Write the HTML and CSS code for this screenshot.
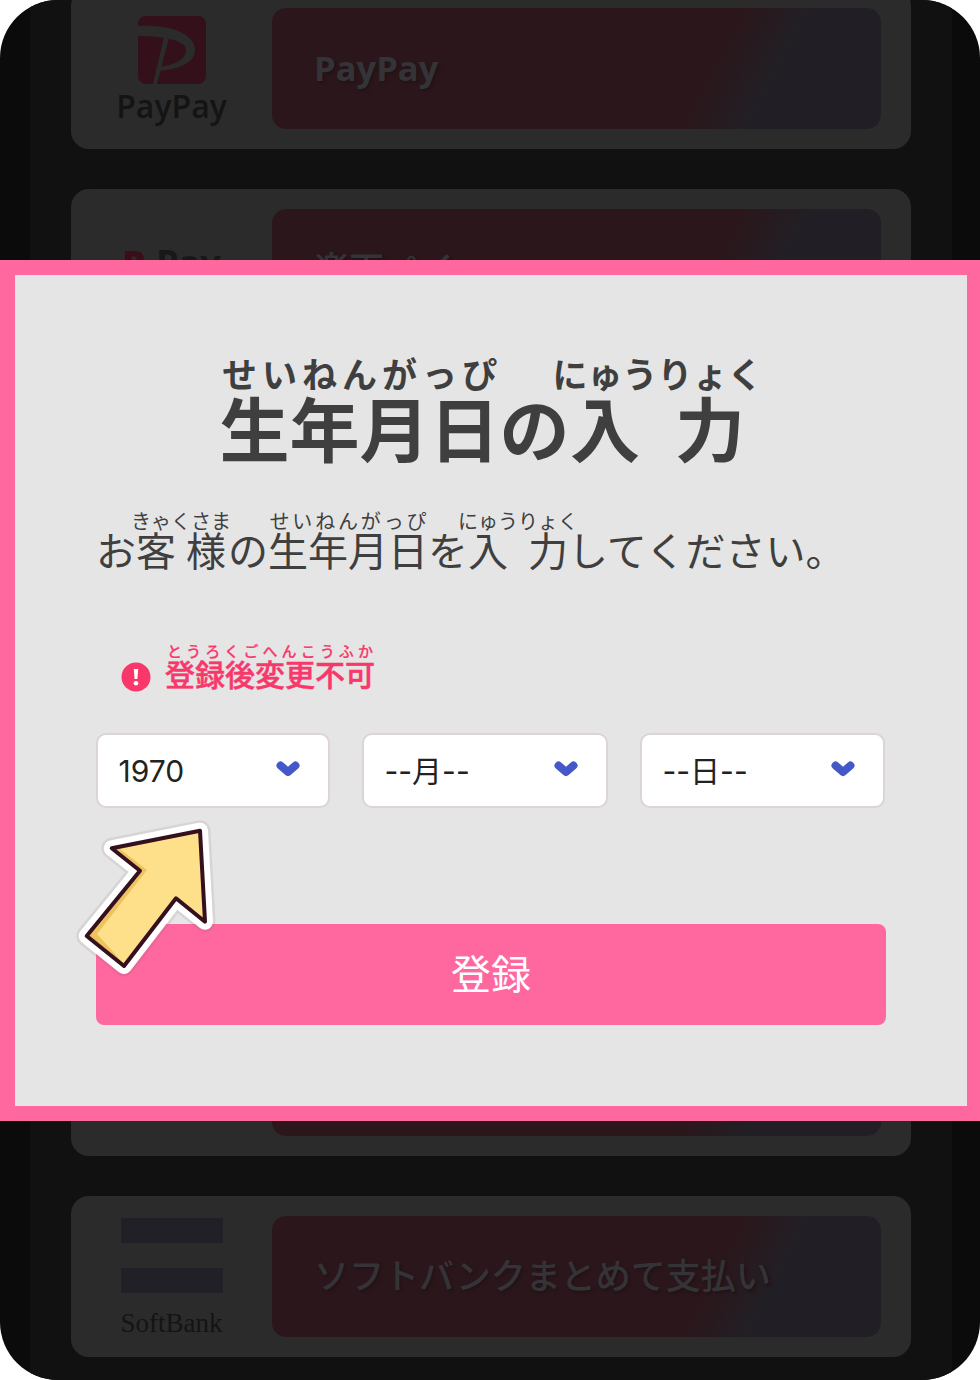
FILE: index.html
```html
<!DOCTYPE html>
<html lang="ja">
<head>
<meta charset="utf-8">
<title>生年月日の入力</title>
<link rel="stylesheet" href="styles.css">
</head>
<body>
<div class="phone">
  <div class="list">
    <div class="card">
      <div class="logo">
        <svg class="pp-icon" viewBox="0 0 68 68" width="68" height="68">
          <rect width="68" height="68" rx="8" fill="#33101a"/>
          <path d="M0 10C28 8 57 16 57 34C57 47 40 54 18 55L18.500 51C34 50 48 44 48 34C48 25 28 20 0 20Z" fill="#2b2b2b"/>
          <path d="M26 21L31 21.500L19 68L15 68Z" fill="#2b2b2b"/>
        </svg>
        <span class="pp-name">PayPay</span>
      </div>
      <div class="pay"><span class="pay-label latin">PayPay</span></div>
    </div>
    <div class="card">
      <div class="logo logo-center"><span class="rp-name"><b>R</b> Pay</span></div>
      <div class="pay"><span class="pay-label">楽天ペイ</span></div>
    </div>
    <div class="card"><div class="logo"></div><div class="pay"></div></div>
    <div class="card"><div class="logo"></div><div class="pay"></div></div>
    <div class="card"><div class="logo"></div><div class="pay"></div></div>
    <div class="card"><div class="logo"></div><div class="pay"></div></div>
    <div class="card">
      <div class="logo logo-sb">
        <span class="sb-bar"></span>
        <span class="sb-bar"></span>
        <span class="sb-name">SoftBank</span>
      </div>
      <div class="pay"><span class="pay-label">ソフトバンクまとめて支払い</span></div>
    </div>
  </div>

  <div class="modal">
    <h1 class="title"><ruby>生年月日<rt>せいねんがっぴ</rt></ruby>の<ruby>入力<rt>にゅうりょく</rt></ruby></h1>
    <p class="lead">お<ruby class="over-lead-a">客様<rt>きゃくさま</rt></ruby>の<ruby>生年月日<rt>せいねんがっぴ</rt></ruby>を<ruby>入力<rt>にゅうりょく</rt></ruby>してください。</p>
    <div class="notice">
      <svg class="notice-icon" viewBox="0 0 30 30" width="30" height="30">
        <circle cx="15" cy="15" r="14.500" fill="#f8386b"/>
        <path d="M12.800 7H17.200L16.400 17H13.600Z" fill="#fff"/>
        <circle cx="15" cy="21.300" r="2.300" fill="#fff"/>
      </svg>
      <span class="notice-text"><ruby>登録後変更不可<rt>とうろくごへんこうふか</rt></ruby></span>
    </div>
    <div class="selects">
      <div class="select"><span>1970</span><svg class="chev" viewBox="0 0 24 18" width="24" height="18"><path d="M4.500 5.500L12 12L19.500 5.500" /></svg></div>
      <div class="select"><span>--月--</span><svg class="chev" viewBox="0 0 24 18" width="24" height="18"><path d="M4.500 5.500L12 12L19.500 5.500" /></svg></div>
      <div class="select"><span>--日--</span><svg class="chev" viewBox="0 0 24 18" width="24" height="18"><path d="M4.500 5.500L12 12L19.500 5.500" /></svg></div>
    </div>
    <button class="submit" type="button">登録</button>
  </div>

  <svg class="arrow" viewBox="0 0 180 180" width="180" height="180">
    <path class="arrow-halo" d="M51.700 38.300L140 20.700L145 111.700L116 88.300L64 156L26.700 126L80 60.700Z"/>
    <path class="arrow-white" d="M51.700 38.300L140 20.700L145 111.700L116 88.300L64 156L26.700 126L80 60.700Z"/>
    <path class="arrow-shade" d="M51.700 38.300L140 20.700L145 111.700L116 88.300L64 156L26.700 126L80 60.700Z"/>
    <path class="arrow-fill" d="M60 39L140 22L144 110L116 88.300L64 155L55 144L37 124L87 60Z"/>
    <path class="arrow-line" d="M51.700 38.300L140 20.700L145 111.700L116 88.300L64 156L26.700 126L80 60.700Z"/>
  </svg>
</div>
</body>
</html>
```
FILE: styles.css
```css
* { box-sizing: border-box; }
html, body { margin: 0; padding: 0; background: #fff; }
body { font-family: "Noto Sans CJK JP", "Noto Sans", sans-serif; }

.phone {
  position: relative;
  width: 980px;
  height: 1380px;
  border-radius: 58px;
  overflow: hidden;
  background: #0b0b0b;
}
.list {
  display: flex;
  flex-direction: column;
  gap: 40.4px;
  height: 1380px;
  margin: 0 28px 0 30px;
  padding: 0 41px;
  background: #111;
  overflow: hidden;
}
.card {
  flex: none;
  display: flex;
  height: 161px;
  padding: 20.400px 30px 20px 0;
  background: #2b2b2b;
  border-radius: 18px;
}
.card:first-child { margin-top: -12.400px; }
.logo {
  flex: none;
  display: flex;
  flex-direction: column;
  align-items: center;
  width: 201px;
  padding-top: 8px;
}
.logo-center { padding-top: 36px; }
.pp-icon { display: block; }
.pp-name {
  font-family: "Open Sans", sans-serif;
  font-weight: 600;
  font-size: 32px;
  line-height: 30px;
  margin-top: 7px;
  color: #141414;
}
.rp-name {
  font-family: "Open Sans", sans-serif;
  font-weight: 700;
  font-size: 36px;
  line-height: 36px;
  color: #181818;
}
.rp-name b { color: #3a0d18; }
.logo-sb { padding: 2px 0 0; gap: 0; }
.sb-bar {
  flex: none;
  width: 102px;
  height: 25px;
  margin-bottom: 25px;
  background: #222027;
}
.sb-name {
  flex: none;
  font-family: "Liberation Serif", serif;
  font-size: 27px;
  line-height: 32px;
  margin-top: -11px;
  color: #141414;
}
.pay {
  flex: 1;
  display: flex;
  align-items: center;
  padding-left: 42px;
  border-radius: 14px;
  background: linear-gradient(118deg, #2b171b 70%, #211f25 80%);
}
.pay-label {
  font-size: 35px;
  line-height: 40px;
  font-weight: 500;
  margin-bottom: 5px;
  color: #343438;
  text-shadow: 2px 2px 3px #221216;
}
.pay-label.latin {
  font-family: "Open Sans", sans-serif;
  font-weight: 700;
  font-size: 34.500px;
  margin-bottom: 0;
}

.modal {
  position: absolute;
  left: 0;
  top: 260px;
  width: 980px;
  height: 861px;
  padding: 0 81px;
  background: #e5e5e5;
  border: solid #ff679f;
  border-width: 15px 13.500px 15px 15px;
  color: #3f3f3f;
}
ruby { ruby-position: over; }
rt { line-height: 1; }
.title {
  margin: 72px -60px 0;
  font-size: 70px;
  line-height: 70px;
  font-weight: 700;
  text-align: center;
  white-space: nowrap;
}
.title rt { font-size: 35px; font-weight: 700; margin-bottom: -3px; }
.lead {
  margin: 44px 0 0;
  font-size: 40px;
  line-height: 40px;
  font-weight: 400;
  white-space: nowrap;
}
.lead rt { font-size: 20px; font-weight: 400; margin-bottom: -5px; }
.over-lead-a { margin: 0 2px 0 0; }
.notice {
  display: flex;
  align-items: center;
  gap: 14px;
  margin: 71px 0 0 25px;
  color: #f8386b;
}
.notice-icon { flex: none; margin-top: 22px; }
.notice-text {
  font-size: 30px;
  line-height: 32px;
  font-weight: 500;
  -webkit-text-stroke: .5px #f8386b;
}
.notice-text rt { font-size: 15px; font-weight: 500; -webkit-text-stroke: .2px #f8386b; }
.selects {
  display: grid;
  grid-template-columns: 234px 246px 245px;
  gap: 32px;
  margin: 41px 0 0;
}
.select {
  display: flex;
  align-items: center;
  justify-content: space-between;
  height: 75px;
  padding: 0 28px 0 20.500px;
  background: #fff;
  border: 2px solid #dcd4d7;
  border-radius: 10px;
  font-family: Inter, "Noto Sans CJK JP", sans-serif;
  font-size: 30px;
  line-height: 30px;
  color: #222;
}
.chev { flex: none; margin-top: -4px; }
.chev path { fill: none; stroke: #4458c8; stroke-width: 8; stroke-linejoin: round; stroke-linecap: round; }
.submit {
  display: block;
  width: 790px;
  height: 101px;
  margin: 116px 0 0;
  padding: 0 0 5px;
  border: 0;
  border-radius: 8px;
  background: #ff679f;
  color: #fff;
  font: 400 40px/1 "Noto Sans CJK JP", sans-serif;
}

.arrow {
  position: absolute;
  left: 60px;
  top: 810px;
}
.arrow path { stroke-linejoin: round; }
.arrow-halo { fill: none; stroke: rgba(120, 90, 100, .12); stroke-width: 21; }
.arrow-white { fill: #fff; stroke: #fff; stroke-width: 16; }
.arrow-shade { fill: #eec25f; }
.arrow-fill { fill: #ffe08a; }
.arrow-line { fill: none; stroke: #35101f; stroke-width: 4; }
```
